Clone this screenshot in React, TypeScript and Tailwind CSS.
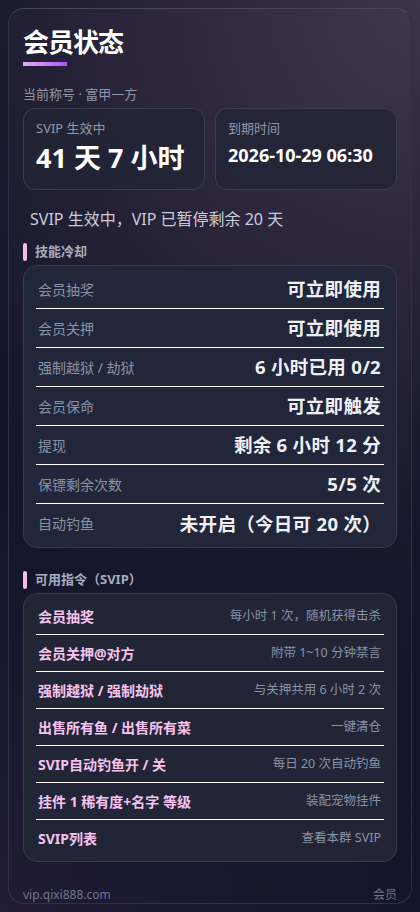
import React from 'react';

const cooldowns: [string, string][] = [
  ['会员抽奖', '可立即使用'],
  ['会员关押', '可立即使用'],
  ['强制越狱 / 劫狱', '6 小时已用 0/2'],
  ['会员保命', '可立即触发'],
  ['提现', '剩余 6 小时 12 分'],
  ['保镖剩余次数', '5/5 次'],
  ['自动钓鱼', '未开启（今日可 20 次）'],
];

const commands: [string, string][] = [
  ['会员抽奖', '每小时 1 次，随机获得击杀'],
  ['会员关押@对方', '附带 1~10 分钟禁言'],
  ['强制越狱 / 强制劫狱', '与关押共用 6 小时 2 次'],
  ['出售所有鱼 / 出售所有菜', '一键清仓'],
  ['SVIP自动钓鱼开 / 关', '每日 20 次自动钓鱼'],
  ['挂件 1 稀有度+名字 等级', '装配宠物挂件'],
  ['SVIP列表', '查看本群 SVIP'],
];

const SectionTitle = ({ text }: { text: string }) => (
  <div className="flex h-[18px] items-center gap-2">
    <span className="h-[18px] w-[4px] rounded-full bg-[#f7b9ee]" />
    <span className="text-[13px] font-bold text-[#a6adbf]">{text}</span>
  </div>
);

export default function App() {
  return (
    <div
      className="min-h-[912px] w-[420px] bg-[#11152a] bg-[radial-gradient(circle_at_100%_0%,#3d3447_0%,#2a2538_25%,transparent_55%),radial-gradient(circle_at_0%_100%,#221c36_0%,transparent_40%),linear-gradient(#10142a,#12162b)] p-2"
      style={{ fontFamily: '"Noto Sans", "Noto Sans CJK SC", sans-serif' }}
    >
      <div className="relative flex h-[896px] flex-col rounded-[16px] border border-[#2e3246] border-t-[#4a4658] bg-[radial-gradient(circle_at_100%_0%,rgba(66,54,80,0.6)_0%,rgba(42,36,58,0.45)_35%,rgba(20,24,40,0.2)_70%)] px-[14px]">
        <div className="mt-[15px] text-[26px] font-semibold leading-[36px] tracking-[-1px] text-white">
          会员状态
        </div>
        <div className="mt-[2px] h-[4px] w-[44px] bg-gradient-to-r from-[#eaa6f4] to-[#a855f7]" />

        <div className="mt-[19px] text-[13px] leading-[18px] text-[#8f97ab]">当前称号 · 富甲一方</div>

        <div className="mt-[5px] grid grid-cols-2 gap-[10px]">
          <div className="h-[82px] rounded-[12px] border border-[#3a3e50] bg-[#222535]/90 px-[12px] pt-[10px]">
            <div className="text-[13px] leading-[18px] text-[#8f97ab]">SVIP 生效中</div>
            <div className="mt-[4px] text-[27px] font-bold leading-[34px] text-white">41 天 7 小时</div>
          </div>
          <div className="h-[82px] rounded-[12px] border border-[#3a3e50] bg-[#232535]/90 px-[12px] pt-[10px]">
            <div className="text-[13px] leading-[18px] text-[#8f97ab]">到期时间</div>
            <div className="mt-[6px] text-[18px] font-bold leading-[24px] text-white">2026-10-29 06:30</div>
          </div>
        </div>

        <div className="mt-[19px] pl-[7px] text-[16px] leading-[20px] text-[#c9cedb]">
          SVIP 生效中，VIP 已暂停剩余 20 天
        </div>

        <div className="mt-[14px]">
          <SectionTitle text="技能冷却" />
        </div>

        <div className="mt-[4px] rounded-[14px] border border-[#363b4e] bg-[#22263a] py-[4px]">
          {cooldowns.map(([label, value], i) => (
            <div
              key={label}
              className={`mx-[12px] flex h-[39px] items-center justify-between pl-[2px] pr-[3px] ${
                i < cooldowns.length - 1 ? 'border-b border-white' : 'h-[38px]'
              }`}
            >
              <span className="text-[14px] text-[#8a92a6]">{label}</span>
              <span className="text-[18.5px] font-bold tracking-[0.3px] text-[#eef0f6]">{value}</span>
            </div>
          ))}
        </div>

        <div className="mt-[23px]">
          <SectionTitle text="可用指令（SVIP）" />
        </div>

        <div className="mt-[4px] rounded-[14px] border border-[#363b4e] bg-[#212536] py-[4px]">
          {commands.map(([label, desc], i) => (
            <div
              key={label}
              className={`mx-[12px] flex h-[37px] items-center justify-between pl-[2px] pr-[3px] ${
                i < commands.length - 1 ? 'border-b border-white' : 'h-[36px]'
              }`}
            >
              <span className="text-[14px] font-bold text-[#f6c3ee]">{label}</span>
              <span className="text-[12.5px] text-[#8a92a6]">{desc}</span>
            </div>
          ))}
        </div>

        <div className="mt-auto mb-[1px] flex items-center justify-between text-[12px] leading-[14px] text-[#6f7790]">
          <span>vip.qixi888.com</span>
          <span>会员</span>
        </div>
      </div>
    </div>
  );
}
